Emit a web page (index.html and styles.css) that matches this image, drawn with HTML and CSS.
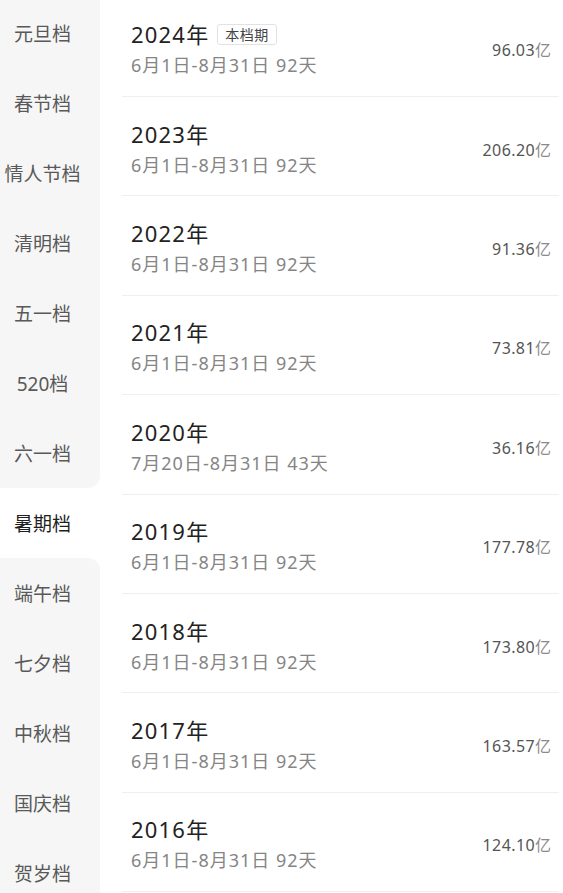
FILE: index.html
```html
<!DOCTYPE html>
<html lang="zh-CN">
<head>
    <meta charset="UTF-8">
    <title>档期票房</title>
    <link rel="stylesheet" href="styles.css">
</head>
<body>

<div class="page">
    <!-- ===== 左侧档期菜单 ===== -->
    <div class="side_menu">
        <div class="menu_item">元旦档</div>
        <div class="menu_item">春节档</div>
        <div class="menu_item">情人节档</div>
        <div class="menu_item">清明档</div>
        <div class="menu_item">五一档</div>
        <div class="menu_item">520档</div>
        <div class="menu_item before_active">六一档</div>
        <div class="menu_item active">暑期档</div>
        <div class="menu_item after_active">端午档</div>
        <div class="menu_item">七夕档</div>
        <div class="menu_item">中秋档</div>
        <div class="menu_item">国庆档</div>
        <div class="menu_item">贺岁档</div>
    </div>

    <!-- ===== 历年票房列表 ===== -->
    <div class="year_list">
        <div class="year_row">
            <div class="year_info">
                <div class="year_title">2024年 <span class="current_tag">本档期</span></div>
                <div class="year_range">6月1日-8月31日 92天</div>
            </div>
            <div class="box_office">96.03<span class="unit">亿</span></div>
        </div>
        <div class="year_row">
            <div class="year_info">
                <div class="year_title">2023年</div>
                <div class="year_range">6月1日-8月31日 92天</div>
            </div>
            <div class="box_office">206.20<span class="unit">亿</span></div>
        </div>
        <div class="year_row">
            <div class="year_info">
                <div class="year_title">2022年</div>
                <div class="year_range">6月1日-8月31日 92天</div>
            </div>
            <div class="box_office">91.36<span class="unit">亿</span></div>
        </div>
        <div class="year_row">
            <div class="year_info">
                <div class="year_title">2021年</div>
                <div class="year_range">6月1日-8月31日 92天</div>
            </div>
            <div class="box_office">73.81<span class="unit">亿</span></div>
        </div>
        <div class="year_row">
            <div class="year_info">
                <div class="year_title">2020年</div>
                <div class="year_range">7月20日-8月31日 43天</div>
            </div>
            <div class="box_office">36.16<span class="unit">亿</span></div>
        </div>
        <div class="year_row">
            <div class="year_info">
                <div class="year_title">2019年</div>
                <div class="year_range">6月1日-8月31日 92天</div>
            </div>
            <div class="box_office">177.78<span class="unit">亿</span></div>
        </div>
        <div class="year_row">
            <div class="year_info">
                <div class="year_title">2018年</div>
                <div class="year_range">6月1日-8月31日 92天</div>
            </div>
            <div class="box_office">173.80<span class="unit">亿</span></div>
        </div>
        <div class="year_row">
            <div class="year_info">
                <div class="year_title">2017年</div>
                <div class="year_range">6月1日-8月31日 92天</div>
            </div>
            <div class="box_office">163.57<span class="unit">亿</span></div>
        </div>
        <div class="year_row">
            <div class="year_info">
                <div class="year_title">2016年</div>
                <div class="year_range">6月1日-8月31日 92天</div>
            </div>
            <div class="box_office">124.10<span class="unit">亿</span></div>
        </div>
    </div>
</div>

</body>
</html>
```

FILE: styles.css
```css
body {
    margin: 0;
    background-color: #fff;
    font-family: "Noto Sans", "Noto Sans CJK SC", sans-serif;
    overflow: hidden;
}

.page {
    display: flex;
    margin-top: -2px;
}

/* ===== Side menu ===== */
.side_menu {
    width: 100px;
    flex-shrink: 0;
    background-color: #fff;
}

.menu_item {
    height: 70px;
    padding-right: 15px;
    display: flex;
    align-items: center;
    justify-content: center;
    background-color: #f6f6f6;
    color: #595959;
    font-size: 19px;
}

.menu_item.active {
    background-color: #fff;
    color: #1f1f1f;
}

.menu_item.before_active {
    border-bottom-right-radius: 12px;
}

.menu_item.after_active {
    border-top-right-radius: 12px;
}

/* ===== Year list ===== */
.year_list {
    flex: 1;
    padding-left: 22px;
    padding-right: 4px;
    margin-top: -0.4px;
}

.year_row {
    height: 99.4px;
    box-sizing: border-box;
    border-bottom: 1px solid #efefef;
    display: flex;
    align-items: center;
    justify-content: space-between;
    padding: 5px 8px 0 9px;
}

.year_title {
    font-size: 22px;
    color: #222;
    line-height: 30px;
    letter-spacing: 1.2px;
    display: flex;
    align-items: center;
}

.current_tag {
    margin-left: 8px;
    font-size: 14px;
    line-height: 19px;
    letter-spacing: 0.5px;
    color: #444;
    border: 1px solid #e2e2e2;
    border-radius: 3px;
    padding: 0 7px;
}

.year_range {
    margin-top: 2px;
    font-size: 18px;
    line-height: 28px;
    letter-spacing: 1px;
    color: #858585;
}

.box_office {
    font-size: 16px;
    letter-spacing: 0.4px;
    color: #555;
}

.box_office .unit {
    letter-spacing: 0;
    color: #8a8a8a;
}
```
